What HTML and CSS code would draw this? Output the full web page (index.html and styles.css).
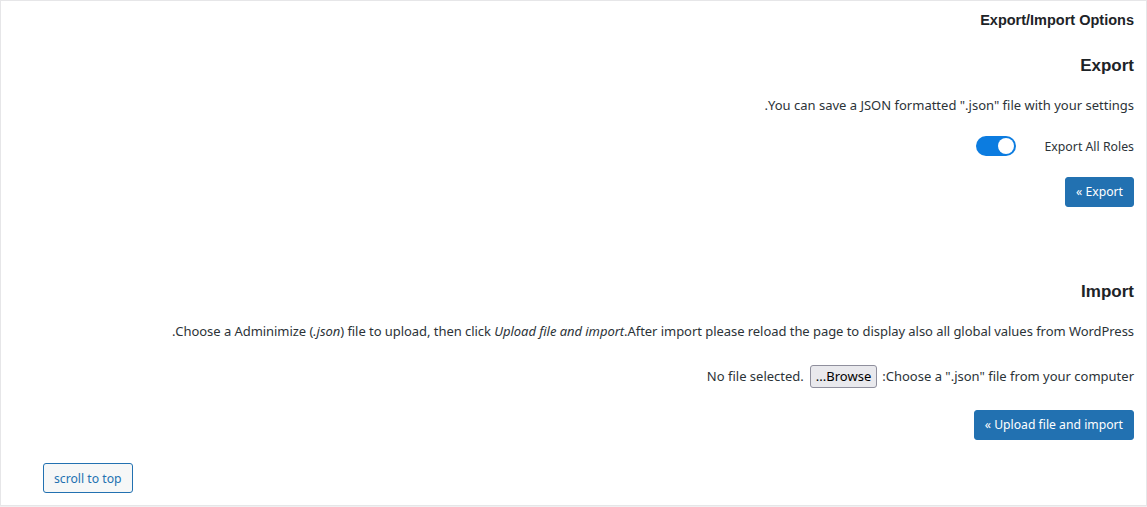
FILE: index.html
```html
<!DOCTYPE html>
<html lang="en" dir="rtl">
<head>
<meta charset="utf-8">
<link rel="stylesheet" href="styles.css">
</head>
<body>
<div class="card">
  <h3 class="title">Export/Import Options</h3>
  <h2 class="section-title export-title">Export</h2>
  <p class="desc">You can save a JSON formatted ".json" file with your settings.</p>
  <div class="toggle-row">
    <span class="toggle-label">Export All Roles</span>
    <span class="toggle"><span class="knob"></span></span>
  </div>
  <div class="btn-row export-row"><button class="btn">Export &raquo;</button></div>
  <h2 class="section-title import-title">Import</h2>
  <p class="desc import-desc">Choose a Adminimize (<em>.json</em>) file to upload, then click <em>Upload file and import</em>.After import please reload the page to display also all global values from WordPress.</p>
  <div class="file-row">
    <span>Choose a ".json" file from your computer:</span>
    <span class="browse">Browse...</span>
    <span class="nofile" dir="ltr">No file selected.</span>
  </div>
  <div class="btn-row upload-row"><button class="btn">Upload file and import &raquo;</button></div>
  <div class="top-row"><button class="btn-secondary">scroll to top</button></div>
</div>
</body>
</html>
```
FILE: styles.css
```css
html, body {
  margin: 0;
  padding: 0;
  background: #f0f0f1;
}
body {
  font-family: "Noto Sans", sans-serif;
  font-size: 13px;
  color: #2c3338;
  width: 1147px;
  height: 507px;
  overflow: hidden;
}
.card {
  box-sizing: border-box;
  width: 1147px;
  height: 506px;
  background: #fff;
  border: 1px solid #e6e6e8;
  padding: 0 12px;
}
.title {
  font-family: "Liberation Sans", Arial, sans-serif;
  font-size: 14.5px;
  font-weight: 700;
  color: #1d2327;
  margin: 11px 0 0 0;
  line-height: 16px;
}
.section-title {
  font-family: "Liberation Sans", Arial, sans-serif;
  font-size: 17px;
  font-weight: 700;
  color: #1d2327;
  margin: 0;
  line-height: 20px;
}
.export-title { margin-top: 28px; }
.import-title { margin-top: 75px; }
.desc {
  margin: 19px 0 0 0;
  line-height: 20px;
}
.import-desc {
  letter-spacing: -0.05px;
}
.toggle-row {
  display: flex;
  align-items: center;
  gap: 28px;
  margin-top: 21px;
  height: 20px;
}
.toggle-label {
  font-size: 12.3px;
}
.toggle {
  position: relative;
  width: 40px;
  height: 20px;
  border-radius: 10px;
  background: #0c7ce0;
  display: inline-block;
}
.knob {
  position: absolute;
  top: 2px;
  left: 22px;
  width: 16px;
  height: 16px;
  border-radius: 50%;
  background: #fff;
}
.btn-row {
  display: flex;
  margin-top: 20px;
}
.export-row { margin-top: 21px; }
.btn {
  font-family: "Noto Sans", sans-serif;
  font-size: 12.2px;
  height: 30px;
  line-height: 28px;
  padding: 0 10px;
  border: 1px solid #2271b1;
  border-radius: 3px;
  background: #2271b1;
  color: #fff;
}
.file-row {
  display: flex;
  align-items: center;
  margin-top: 23px;
  height: 24px;
}
.browse {
  border: 1px solid #8f8f9d;
  border-radius: 3px;
  background: #e9e9ed;
  padding: 0 5px;
  line-height: 21px;
  color: #000;
  margin: 0 5px 0 6px;
}
.upload-row { margin-top: 22px; }
.top-row {
  display: flex;
  justify-content: flex-end;
  margin-top: 23px;
  padding-left: 30px;
}
.btn-secondary {
  font-family: "Noto Sans", sans-serif;
  font-size: 12.2px;
  height: 30px;
  padding: 0 10px;
  border: 1px solid #2271b1;
  border-radius: 3px;
  background: #f6f7f7;
  color: #2271b1;
}
```
